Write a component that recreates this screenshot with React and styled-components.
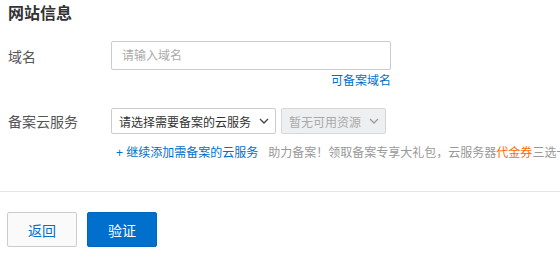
import React from "react";
import styled, { createGlobalStyle } from "styled-components";

const GlobalStyle = createGlobalStyle`
  html, body {
    margin: 0;
    padding: 0;
    background: #fff;
    overflow: hidden;
  }
  body {
    font-family: "Liberation Sans", "Noto Sans CJK SC", sans-serif;
    color: #333;
  }
`;

const Page = styled.div`
  width: 560px;
  height: 263px;
  overflow: hidden;
`;

const Section = styled.div`
  padding: 4px 0 0 8px;
`;

const Title = styled.h3`
  margin: 0;
  font-size: 16px;
  line-height: 20px;
  font-weight: bold;
  color: #333;
`;

const Row = styled.div`
  display: flex;
  align-items: center;
  margin-top: ${(p) => p.$top}px;
`;

const Label = styled.label`
  width: 103px;
  flex: none;
  font-size: 14px;
  color: #555;
`;

const Input = styled.input`
  box-sizing: border-box;
  width: 280px;
  height: 29px;
  border: 1px solid #ccc;
  border-radius: 2px;
  padding: 0 10px;
  font-family: inherit;
  font-size: 12px;
  outline: none;
  &::placeholder {
    color: #aaa;
  }
`;

const Hint = styled.div`
  margin: 3px 0 0 103px;
  width: 280px;
  text-align: right;
  font-size: 12px;
  line-height: 16px;
  color: #0070cc;
`;

const Select = styled.div`
  box-sizing: border-box;
  display: flex;
  align-items: center;
  justify-content: space-between;
  height: 26px;
  width: ${(p) => p.$width}px;
  margin-right: 5px;
  padding: 0 6px 0 7px;
  border: 1px solid ${(p) => (p.$disabled ? "#d6d6d6" : "#ccc")};
  border-radius: 2px;
  background: ${(p) => (p.$disabled ? "#eeeff0" : "#fff")};
  color: ${(p) => (p.$disabled ? "#aaa" : "#333")};
  font-size: 12px;
`;

const Helper = styled.div`
  margin: 10px 0 0 108px;
  font-size: 12px;
  line-height: 18px;
  white-space: nowrap;
  color: #999;
`;

const Link = styled.span`
  color: #0070cc;
  margin-right: 10px;
`;

const Orange = styled.span`
  color: #ff6a00;
`;

const Divider = styled.hr`
  margin: 29px 0 0;
  border: none;
  border-top: 1px solid #e5e5e5;
`;

const Actions = styled.div`
  display: flex;
  gap: 10px;
  padding: 20px 0 0 7px;
`;

const Button = styled.button`
  box-sizing: border-box;
  width: 70px;
  height: 35px;
  border-radius: 2px;
  font-family: inherit;
  font-size: 14px;
  cursor: pointer;
  border: 1px solid ${(p) => (p.$primary ? "#0067be" : "#ccc")};
  background: ${(p) => (p.$primary ? "#0070cc" : "#fafafa")};
  color: ${(p) => (p.$primary ? "#fff" : "#0070cc")};
`;

const Chevron = ({ color }) => (
  <svg width="10" height="6" viewBox="0 0 10 6">
    <polyline points="1,1 5,5 9,1" fill="none" stroke={color} strokeWidth="1.3" />
  </svg>
);

export default function App() {
  return (
    <Page>
      <GlobalStyle />
      <Section>
        <Title>网站信息</Title>
        <Row $top={17}>
          <Label>域名</Label>
          <Input placeholder="请输入域名" />
        </Row>
        <Hint>可备案域名</Hint>
        <Row $top={19}>
          <Label>备案云服务</Label>
          <Select $width={165}>
            请选择需要备案的云服务
            <Chevron color="#444" />
          </Select>
          <Select $width={105} $disabled>
            暂无可用资源
            <Chevron color="#999" />
          </Select>
        </Row>
        <Helper>
          <Link>+ 继续添加需备案的云服务</Link>
          助力备案！领取备案专享大礼包，云服务器<Orange>代金券</Orange>三选一
        </Helper>
      </Section>
      <Divider />
      <Actions>
        <Button>返回</Button>
        <Button $primary>验证</Button>
      </Actions>
    </Page>
  );
}
